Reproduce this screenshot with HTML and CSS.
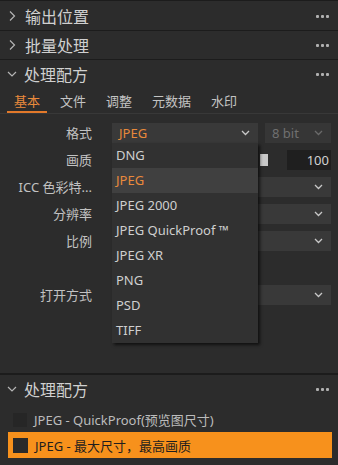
FILE: index.html
```html
<!DOCTYPE html>
<html lang="zh-CN">
<head>
    <meta charset="UTF-8">
    <meta name="viewport" content="width=device-width, initial-scale=1.0">
    <title>处理配方</title>
    <link rel="stylesheet" href="styles.css">
</head>
<body>
    <div class="panel">
        <div class="head">
            <svg class="caret" width="8" height="12" viewBox="0 0 8 12"><polyline points="2,1.5 6.5,6 2,10.5" /></svg>
            <span class="head-title">输出位置</span>
            <span class="dots"><i></i><i></i><i></i></span>
        </div>
        <div class="head">
            <svg class="caret" width="8" height="12" viewBox="0 0 8 12"><polyline points="2,1.5 6.5,6 2,10.5" /></svg>
            <span class="head-title">批量处理</span>
            <span class="dots"><i></i><i></i><i></i></span>
        </div>
        <div class="head open">
            <svg class="caret down" width="10" height="8" viewBox="0 0 10 8"><polyline points="1,2 5,6 9,2" /></svg>
            <span class="head-title">处理配方</span>
            <span class="dots"><i></i><i></i><i></i></span>
        </div>

        <div class="tabs">
            <span class="tab active">基本</span>
            <span class="tab">文件</span>
            <span class="tab">调整</span>
            <span class="tab">元数据</span>
            <span class="tab">水印</span>
        </div>

        <div class="form">
            <div class="label">格式</div>
            <div class="ctrl split">
                <div class="menu-anchor">
                    <div class="select accent">
                        <span>JPEG</span>
                        <svg class="chev" width="9" height="6" viewBox="0 0 9 6"><polyline points="1,1 4.5,4.5 8,1" /></svg>
                    </div>
                    <ul class="dropdown">
                        <li>DNG</li>
                        <li class="current">JPEG</li>
                        <li>JPEG 2000</li>
                        <li>JPEG QuickProof ™</li>
                        <li>JPEG XR</li>
                        <li>PNG</li>
                        <li>PSD</li>
                        <li>TIFF</li>
                    </ul>
                </div>
                <div class="select bits">
                    <span>8 bit</span>
                    <svg class="chev" width="9" height="6" viewBox="0 0 9 6"><polyline points="1,1 4.5,4.5 8,1" /></svg>
                </div>
            </div>

            <div class="label">画质</div>
            <div class="ctrl split">
                <div class="slider"><span class="knob"></span></div>
                <div class="number">100</div>
            </div>

            <div class="label">ICC 色彩特...</div>
            <div class="ctrl">
                <div class="select"><span></span><svg class="chev" width="9" height="6" viewBox="0 0 9 6"><polyline points="1,1 4.5,4.5 8,1" /></svg></div>
            </div>

            <div class="label">分辨率</div>
            <div class="ctrl">
                <div class="select"><span></span><svg class="chev" width="9" height="6" viewBox="0 0 9 6"><polyline points="1,1 4.5,4.5 8,1" /></svg></div>
            </div>

            <div class="label">比例</div>
            <div class="ctrl">
                <div class="select"><span></span><svg class="chev" width="9" height="6" viewBox="0 0 9 6"><polyline points="1,1 4.5,4.5 8,1" /></svg></div>
            </div>

            <div class="label"></div>
            <div class="ctrl"></div>

            <div class="label">打开方式</div>
            <div class="ctrl">
                <div class="select"><span></span><svg class="chev" width="9" height="6" viewBox="0 0 9 6"><polyline points="1,1 4.5,4.5 8,1" /></svg></div>
            </div>
        </div>

        <div class="head open section-top">
            <svg class="caret down" width="10" height="8" viewBox="0 0 10 8"><polyline points="1,2 5,6 9,2" /></svg>
            <span class="head-title">处理配方</span>
            <span class="dots"><i></i><i></i><i></i></span>
        </div>

        <ul class="recipes">
            <li><span class="check"></span>JPEG - QuickProof(预览图尺寸)</li>
            <li class="selected"><span class="check"></span>JPEG - 最大尺寸，最高画质</li>
        </ul>
    </div>
</body>
</html>
```

FILE: styles.css
```css
body {
    margin: 0;
    background-color: #2c2c2c;
    color: #c8c8c8;
    font-family: "Noto Sans", "Noto Sans CJK SC", sans-serif;
    font-size: 13px;
}
.panel {
    width: 338px;
    height: 465px;
    border-top: 1px solid #1c1c1c;
    padding-top: 1px;
    box-sizing: border-box;
    overflow: hidden;
}
.head {
    display: flex;
    align-items: center;
    height: 28px;
    padding: 0 7px 0 8px;
    border-bottom: 1px solid #1c1c1c;
}
.head.open {
    border-bottom: none;
}
.head.section-top {
    border-top: 2px solid #1c1c1c;
}
.caret {
    flex: none;
    fill: none;
    stroke: #b5b5b5;
    stroke-width: 1.2;
}
.caret.down {
    margin-left: -1px;
}
.head-title {
    margin-left: 9px;
    font-family: "Noto Sans CJK SC", sans-serif;
    font-size: 16px;
    color: #d0d0d0;
}
.caret.down + .head-title {
    margin-left: 7px;
}
.dots {
    margin-left: auto;
    display: flex;
    gap: 2px;
    margin-right: 2px;
}
.dots i {
    width: 3px;
    height: 3px;
    border-radius: 1px;
    background-color: #b0b0b0;
}
.tabs {
    display: flex;
    gap: 6px;
    height: 26px;
    padding-left: 7px;
    border-bottom: 1px solid #383838;
    box-sizing: border-box;
}
.tab {
    padding: 0 7px;
    line-height: 25px;
    font-family: "Noto Sans CJK SC", sans-serif;
    color: #c4c4c4;
}
.tab.active {
    color: #ea8a3c;
    box-shadow: inset 0 -2px 0 #e3792a;
}
.form {
    display: grid;
    grid-template-columns: 92px 1fr;
    grid-auto-rows: 20px;
    column-gap: 20px;
    row-gap: 7px;
    padding: 9px 7px 0 0;
    margin-bottom: 68px;
}
.label {
    text-align: right;
    line-height: 20px;
    white-space: nowrap;
    color: #c2c2c2;
}
.ctrl {
    display: flex;
    min-width: 0;
}
.split {
    gap: 7px;
}
.menu-anchor {
    position: relative;
    flex: 1;
}
.select {
    flex: 1;
    display: flex;
    align-items: center;
    height: 20px;
    padding: 0 8px 0 7px;
    background-color: #393939;
}
.select span {
    flex: 1;
}
.chev {
    fill: none;
    stroke: #c8c8c8;
    stroke-width: 1.3;
}
.accent {
    color: #e8893b;
}
.bits {
    flex: none;
    width: 66px;
    box-sizing: border-box;
    background-color: #363636;
    color: #707070;
}
.bits .chev {
    stroke: #6a6a6a;
}
.slider {
    flex: 1;
    position: relative;
    display: flex;
    justify-content: flex-end;
    align-items: center;
    padding-right: 12px;
}
.knob {
    width: 8px;
    height: 12px;
    background-color: #c9c9c9;
}
.number {
    width: 44px;
    background-color: #1f1f1f;
    text-align: right;
    line-height: 20px;
    padding-right: 2px;
    box-sizing: border-box;
    color: #d2d2d2;
}
.dropdown {
    position: absolute;
    top: 20px;
    left: 0;
    right: 0;
    margin: 0;
    padding: 0;
    list-style: none;
    background-color: #313131;
    box-shadow: 2px 2px 3px rgba(0, 0, 0, 0.65);
    z-index: 2;
}
.dropdown li {
    height: 25px;
    line-height: 25px;
    padding-left: 4px;
    color: #cfcfcf;
}
.dropdown li.current {
    background-color: #404040;
    color: #ea8a3c;
}
.recipes {
    list-style: none;
    margin: 4px 6px 0 8px;
    padding: 0;
}
.recipes li {
    display: flex;
    align-items: center;
    gap: 7px;
    height: 25px;
    padding-left: 5px;
    color: #bcbcbc;
    font-family: "Noto Sans", "Noto Sans CJK SC", sans-serif;
}
.check {
    width: 14px;
    height: 14px;
    background-color: #262626;
}
.recipes li.selected {
    height: 26px;
    background-color: #f7911c;
    color: #1e1e1e;
}
.selected .check {
    width: 15px;
    height: 15px;
    background-color: #2a2a2a;
}
```
